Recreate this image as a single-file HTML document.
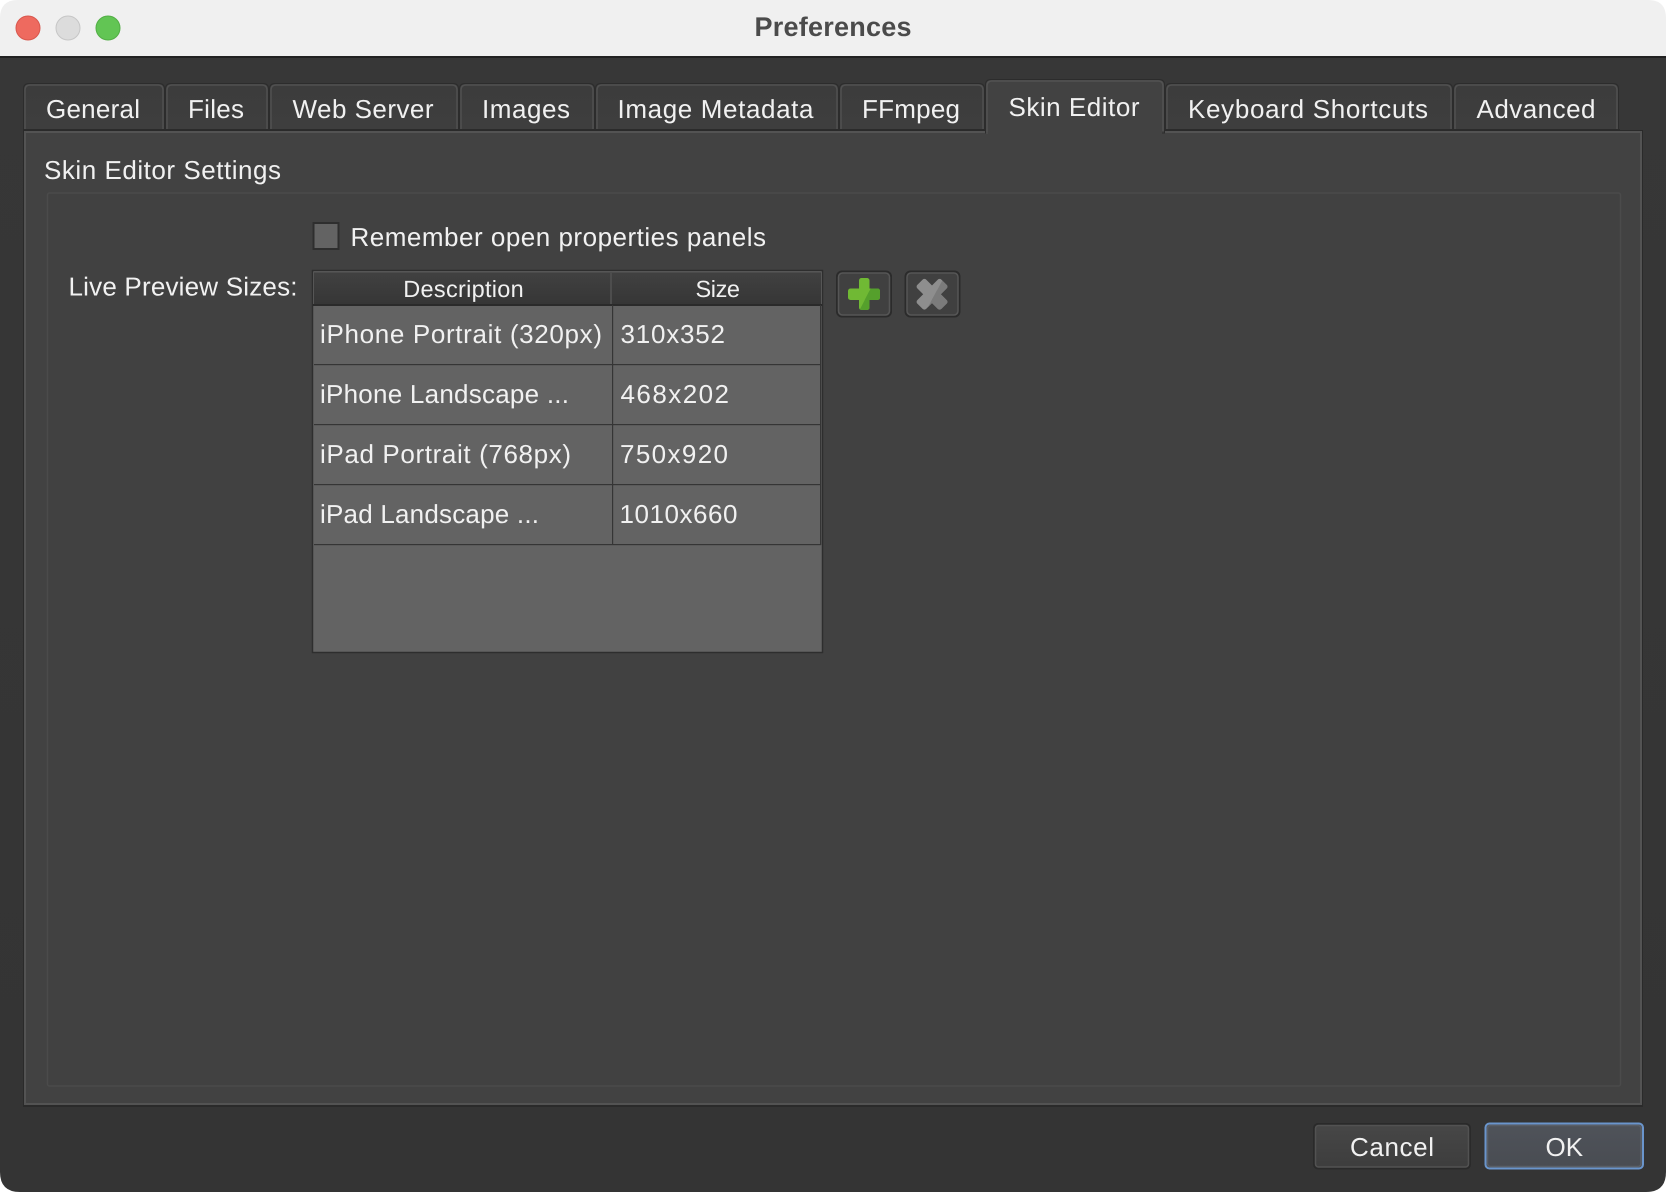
<!DOCTYPE html>
<html>
<head>
<meta charset="utf-8">
<title>Preferences</title>
<style>
html,body{margin:0;padding:0;background:#fff;width:1666px;height:1192px;overflow:hidden}
svg{display:block}
text{font-family:"Liberation Sans",sans-serif;font-size:26px;fill:#f1f1f1;text-rendering:geometricPrecision}
.h{font-size:23.5px}
</style>
</head>
<body>
<svg width="1666" height="1192" viewBox="0 0 1666 1192" xmlns="http://www.w3.org/2000/svg">
<defs>
<linearGradient id="tab" x1="0" y1="0" x2="0" y2="1"><stop offset="0" stop-color="#3c3c3c"/><stop offset="1" stop-color="#3e3e3e"/></linearGradient>
<linearGradient id="hd" x1="0" y1="0" x2="0" y2="1"><stop offset="0" stop-color="#414141"/><stop offset="1" stop-color="#363636"/></linearGradient>
<linearGradient id="btn" x1="0" y1="0" x2="0" y2="1"><stop offset="0" stop-color="#474747"/><stop offset="1" stop-color="#3d3d3d"/></linearGradient>
<linearGradient id="okb" x1="0" y1="0" x2="0" y2="1"><stop offset="0" stop-color="#4f535a"/><stop offset="1" stop-color="#494c52"/></linearGradient>
<linearGradient id="win" x1="0" y1="0" x2="0" y2="1"><stop offset="0" stop-color="#373737"/><stop offset="1" stop-color="#343434"/></linearGradient>
<clipPath id="xdark"><polygon points="948,270 968,270 968,320 921,320"/></clipPath>
<clipPath id="pdark"><polygon points="873,284 885,284 885,315 857,315"/></clipPath>
</defs>

<!-- window -->
<path d="M0 56V18Q0 0 18 0H1648Q1666 0 1666 18V56Z" fill="#f0f0f0"/>
<path d="M0 56H1666V1172Q1666 1192 1646 1192H20Q0 1192 0 1172Z" fill="url(#win)"/>
<rect x="0" y="56" width="1666" height="2" fill="#222"/>

<!-- traffic lights -->
<circle cx="28" cy="28" r="12" fill="#ee6a5f" stroke="#d8574d" stroke-width="1"/>
<circle cx="68" cy="28" r="12" fill="#dcdcdc" stroke="#c6c6c6" stroke-width="1"/>
<circle cx="108" cy="28" r="12" fill="#62c554" stroke="#52ae45" stroke-width="1"/>
<text x="754.500" y="36" textLength="157" lengthAdjust="spacing" style="font-size:27px;font-weight:bold;fill:#4b4b4b">Preferences</text>

<!-- tabs -->
<g fill="url(#tab)" stroke="#2c2c2c" stroke-width="1">
<path d="M23.5 131V89Q23.5 83.5 29 83.5H159Q164.500 83.5 164.500 89V131Z"/>
<path d="M165.500 131V89Q165.500 83.5 171 83.500H263Q268.500 83.5 268.500 89V131Z"/>
<path d="M269.500 131V89Q269.500 83.5 275 83.500H453Q458.500 83.5 458.500 89V131Z"/>
<path d="M459.500 131V89Q459.500 83.5 465 83.500H589Q594.500 83.5 594.500 89V131Z"/>
<path d="M595.500 131V89Q595.500 83.5 601 83.500H833Q838.500 83.5 838.500 89V131Z"/>
<path d="M839.500 131V89Q839.500 83.5 845 83.500H979Q984.500 83.5 984.500 89V131Z"/>
<path d="M1165.500 131V89Q1165.500 83.5 1171 83.500H1447Q1452.500 83.5 1452.500 89V131Z"/>
<path d="M1453.500 131V89Q1453.500 83.5 1459 83.500H1613Q1618.500 83.5 1618.500 89V131Z"/>
</g>
<g fill="none" stroke="#505050" stroke-width="1.500">
<path d="M25 129V90Q25 85 30 85H158Q163 85 163 90V129"/>
<path d="M167 129V90Q167 85 172 85H262Q267 85 267 90V129"/>
<path d="M271 129V90Q271 85 276 85H452Q457 85 457 90V129"/>
<path d="M461 129V90Q461 85 466 85H588Q593 85 593 90V129"/>
<path d="M597 129V90Q597 85 602 85H832Q837 85 837 90V129"/>
<path d="M841 129V90Q841 85 846 85H978Q983 85 983 90V129"/>
<path d="M1167 129V90Q1167 85 1172 85H1446Q1451 85 1451 90V129"/>
<path d="M1455 129V90Q1455 85 1460 85H1612Q1617 85 1617 90V129"/>
</g>
<rect x="23" y="129" width="1597" height="2" fill="#2b2b2b"/>

<!-- pane -->
<rect x="23" y="130" width="1620" height="977" fill="#2a2a2a"/>
<rect x="24" y="131" width="1618" height="974" fill="#535353"/>
<rect x="26" y="133" width="1614" height="970" fill="#424242"/>

<!-- active tab -->
<path d="M985.500 133V85Q985.500 79.500 991 79.500H1159Q1164.500 79.500 1164.500 85V133Z" fill="#424242" stroke="#2c2c2c" stroke-width="1"/>
<path d="M987 134V86Q987 81 992 81H1158Q1163 81 1163 86V131" fill="none" stroke="#525252" stroke-width="1.500"/>
<rect x="988" y="128" width="174" height="8" fill="#424242"/>

<!-- tab labels -->
<text x="46" y="118" textLength="94" lengthAdjust="spacing">General</text>
<text x="188" y="118" textLength="56" lengthAdjust="spacing">Files</text>
<text x="292.500" y="118" textLength="141" lengthAdjust="spacing">Web Server</text>
<text x="482" y="118" textLength="88" lengthAdjust="spacing">Images</text>
<text x="617.500" y="118" textLength="196" lengthAdjust="spacing">Image Metadata</text>
<text x="862" y="118" textLength="98" lengthAdjust="spacing">FFmpeg</text>
<text x="1008.500" y="116" textLength="131" lengthAdjust="spacing">Skin Editor</text>
<text x="1188" y="118" textLength="240" lengthAdjust="spacing">Keyboard Shortcuts</text>
<text x="1476.500" y="118" textLength="119" lengthAdjust="spacing">Advanced</text>

<!-- group box -->
<text x="44" y="179" textLength="237" lengthAdjust="spacing">Skin Editor Settings</text>
<rect x="47.500" y="193" width="1573" height="893" fill="#414141" stroke="#4b4b4b" stroke-width="1.500" rx="2"/>

<!-- checkbox -->
<rect x="313.500" y="223" width="25" height="26" fill="#636363" stroke="#2e2e2e" stroke-width="2"/>
<text x="350.500" y="246" textLength="415.500" lengthAdjust="spacing">Remember open properties panels</text>
<text x="68.500" y="295.500" textLength="229" lengthAdjust="spacing">Live Preview Sizes:</text>

<!-- table -->
<rect x="312.500" y="270.500" width="510" height="382" fill="#636363" stroke="#2e2e2e" stroke-width="1.500"/>
<rect x="314" y="272" width="507" height="32" fill="url(#hd)"/>
<rect x="314" y="272" width="507" height="1" fill="#4c4c4c"/>
<rect x="610" y="272" width="2" height="32" fill="#4d4d4d"/>
<rect x="313" y="304" width="509" height="2" fill="#2a2a2a"/>
<g fill="#353535">
<rect x="314" y="364" width="507" height="1.200"/>
<rect x="314" y="424" width="507" height="1.200"/>
<rect x="314" y="484" width="507" height="1.200"/>
<rect x="314" y="544" width="507" height="1.200"/>
<rect x="612" y="305" width="1.200" height="240"/>
<rect x="820" y="305" width="1.200" height="240"/>
</g>
<text class="h" x="403.300" y="297" textLength="120.400" lengthAdjust="spacing">Description</text>
<text class="h" x="695.500" y="297" textLength="44.500" lengthAdjust="spacing">Size</text>
<text x="320" y="343" textLength="282" lengthAdjust="spacing">iPhone Portrait (320px)</text>
<text x="620.500" y="343" textLength="104.500" lengthAdjust="spacing">310x352</text>
<text x="320" y="403" textLength="249" lengthAdjust="spacing">iPhone Landscape ...</text>
<text x="620.500" y="403" textLength="108.500" lengthAdjust="spacing">468x202</text>
<text x="320" y="463" textLength="251" lengthAdjust="spacing">iPad Portrait (768px)</text>
<text x="620" y="463" textLength="108" lengthAdjust="spacing">750x920</text>
<text x="320" y="523" textLength="219" lengthAdjust="spacing">iPad Landscape ...</text>
<text x="619.500" y="523" textLength="118" lengthAdjust="spacing">1010x660</text>

<!-- plus button -->
<rect x="837" y="271.500" width="54" height="45" rx="5" fill="#404040" stroke="#2b2b2b" stroke-width="2"/>
<rect x="838.500" y="273" width="51" height="42" rx="4" fill="none" stroke="#565656" stroke-width="1.500"/>
<g fill="#70b934">
<rect x="859" y="278" width="10.500" height="32" rx="2.500"/>
<rect x="848" y="288.500" width="32" height="11.500" rx="2.500"/>
</g>
<g fill="#55a02c" clip-path="url(#pdark)">
<rect x="859" y="278" width="10.500" height="32" rx="2.500"/>
<rect x="848" y="288.500" width="32" height="11.500" rx="2.500"/>
</g>

<!-- x button -->
<rect x="905.500" y="271.500" width="54" height="45" rx="5" fill="#404040" stroke="#2b2b2b" stroke-width="2"/>
<rect x="907" y="273" width="51" height="42" rx="4" fill="none" stroke="#565656" stroke-width="1.500"/>
<g fill="#8e8e8e">
<rect x="915" y="288" width="34" height="12.500" rx="2.500" transform="rotate(45 932 294.250)"/>
<rect x="915" y="288" width="34" height="12.500" rx="2.500" transform="rotate(-45 932 294.250)"/>
</g>
<g clip-path="url(#xdark)"><g fill="#7b7b7b">
<rect x="915" y="288" width="34" height="12.500" rx="2.500" transform="rotate(45 932 294.250)"/>
<rect x="915" y="288" width="34" height="12.500" rx="2.500" transform="rotate(-45 932 294.250)"/>
</g></g>

<!-- dialog buttons -->
<rect x="1314" y="1124" width="156" height="44.500" rx="4" fill="url(#btn)" stroke="#2a2a2a" stroke-width="2"/>
<rect x="1315.500" y="1125.500" width="153" height="41.500" rx="3" fill="none" stroke="#525252" stroke-width="1.500"/>
<text x="1350" y="1156" textLength="84" lengthAdjust="spacing">Cancel</text>
<rect x="1485.500" y="1123.500" width="157.500" height="45" rx="4" fill="url(#okb)" stroke="#6a95cc" stroke-width="2"/>
<rect x="1487.500" y="1125.500" width="153.500" height="41" rx="3" fill="none" stroke="#5a5f67" stroke-width="1.500"/>
<text x="1545.500" y="1156" textLength="37.600" lengthAdjust="spacing">OK</text>
</svg>
</body>
</html>
